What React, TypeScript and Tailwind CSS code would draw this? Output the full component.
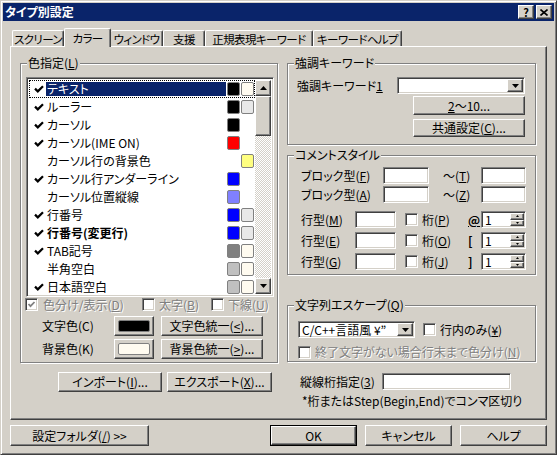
import React from "react";

const raised =
  "bg-[#d4d0c8] border border-t-white border-l-white border-r-[#404040] border-b-[#404040] shadow-[inset_-1px_-1px_0_#808080]";
const sunken =
  "bg-white border border-t-[#808080] border-l-[#808080] border-r-white border-b-white shadow-[inset_1px_1px_0_#404040,inset_-1px_-1px_0_#d4d0c8]";
const disabled = "text-[#808080] [text-shadow:1px_1px_0_#fff]";
const tab =
  "h-[16px] flex items-center justify-center whitespace-nowrap text-[11.5px] tracking-[-0.6px] border-t border-l border-r border-t-white border-l-white border-r-[#404040] rounded-t-[2px] shadow-[inset_-1px_0_0_#808080]";

type Item = { label: string; check: boolean; fg?: string; bg?: string; bold?: boolean };

const items: Item[] = [
  { label: "テキスト", check: true, fg: "bg-black", bg: "bg-[#fffbf0]" },
  { label: "ルーラー", check: true, fg: "bg-black", bg: "bg-[#e8e8e8]" },
  { label: "カーソル", check: true, fg: "bg-black" },
  { label: "カーソル(IME ON)", check: true, fg: "bg-[#ff0000]" },
  { label: "カーソル行の背景色", check: false, bg: "bg-[#ffff80]" },
  { label: "カーソル行アンダーライン", check: true, fg: "bg-[#0000ff]" },
  { label: "カーソル位置縦線", check: false, fg: "bg-[#8080ff]" },
  { label: "行番号", check: true, fg: "bg-[#0000ff]", bg: "bg-[#e8e8e8]" },
  { label: "行番号(変更行)", check: true, fg: "bg-[#0000ff]", bg: "bg-[#e8e8e8]", bold: true },
  { label: "TAB記号", check: true, fg: "bg-[#808080]", bg: "bg-[#fffbf0]" },
  { label: "半角空白", check: false, fg: "bg-[#c0c0c0]", bg: "bg-[#fffbf0]" },
  { label: "日本語空白", check: true, fg: "bg-[#c0c0c0]", bg: "bg-[#fffbf0]" },
];

function Arrow({ dir }: { dir: "up" | "down" }) {
  return (
    <svg width="7" height="4" viewBox="0 0 7 4">
      {dir === "up" ? <polygon points="3.5,0 7,4 0,4" fill="#000" /> : <polygon points="0,0 7,0 3.5,4" fill="#000" />}
    </svg>
  );
}

function Check({ on, off }: { on?: boolean; off?: boolean }) {
  return (
    <div className={`w-[13px] h-[13px] shrink-0 flex items-center justify-center ${sunken} ${off ? "bg-[#d4d0c8]" : ""}`}>
      {on && (
        <svg width="9" height="9" viewBox="0 0 9 9">
          <polyline points="1.5,4 3.5,6.2 7.5,2" fill="none" stroke={off ? "#808080" : "#000"} strokeWidth="1.8" />
        </svg>
      )}
    </div>
  );
}

function Group({ label, className, children }: { label: React.ReactNode; className: string; children?: React.ReactNode }) {
  return (
    <div className={`relative border border-[#808080] shadow-[inset_1px_1px_0_#fff,1px_1px_0_#fff] ${className}`}>
      <span className="absolute -top-[8px] left-[6px] bg-[#d4d0c8] px-[1px] leading-[14px] whitespace-nowrap">{label}</span>
      {children}
    </div>
  );
}

function Combo({ text, className }: { text?: string; className: string }) {
  return (
    <div className={`flex items-stretch p-[1px] ${sunken} ${className}`}>
      <div className="flex-1 pl-[2px] flex items-center leading-[13px] whitespace-nowrap">{text}</div>
      <div className={`w-[16px] flex items-center justify-center ${raised}`}>
        <Arrow dir="down" />
      </div>
    </div>
  );
}

function Spin({ value }: { value: string }) {
  return (
    <div className={`w-[45px] h-[17px] flex items-stretch p-[1px] ${sunken}`}>
      <div className="flex-1 pl-[2px] flex items-center leading-[13px]">{value}</div>
      <div className="w-[14px] flex flex-col">
        <div className={`flex-1 flex items-center justify-center ${raised}`}>
          <svg width="3" height="2" viewBox="0 0 3 2"><polygon points="1.5,0 3,2 0,2" fill="#000" /></svg>
        </div>
        <div className={`flex-1 flex items-center justify-center ${raised}`}>
          <svg width="3" height="2" viewBox="0 0 3 2"><polygon points="0,0 3,0 1.5,2" fill="#000" /></svg>
        </div>
      </div>
    </div>
  );
}

function Field({ className }: { className: string }) {
  return <div className={`${sunken} ${className}`} />;
}

function Swatch({ color }: { color?: string }) {
  return (
    <div className="w-[14px] h-[18px] flex items-center justify-start">
      {color && <div className={`w-[13px] h-[14px] border border-[#808080] rounded-[2px] ${color}`} />}
    </div>
  );
}

export default function App() {
  return (
    <div className="w-[557px] h-[455px] bg-[#d4d0c8] border border-t-[#d4d0c8] border-l-[#d4d0c8] border-r-[#404040] border-b-[#404040] shadow-[inset_1px_1px_0_#fff,inset_-1px_-1px_0_#808080] p-[2px] text-[12px] leading-[14px] text-black font-['Noto_Sans_CJK_JP',sans-serif] [font-feature-settings:'palt'] overflow-hidden">
      {/* title bar */}
      <div className="h-[18px] bg-[#0a246a] flex items-center justify-between pl-[2px] pr-[2px]">
        <span className="text-white font-bold text-[12px]">タイプ別設定</span>
        <div className="flex gap-[2px]">
          <div className={`w-[16px] h-[14px] flex items-center justify-center font-bold text-[11px] leading-none ${raised}`}>?</div>
          <div className={`w-[16px] h-[14px] flex items-center justify-center ${raised}`}>
            <svg width="8" height="7" viewBox="0 0 8 7">
              <path d="M0.5 0.5 L7.5 6.5 M7.5 0.5 L0.5 6.5" stroke="#000" strokeWidth="1.6" />
            </svg>
          </div>
        </div>
      </div>

      {/* tabs */}
      <div className="mt-[7px] ml-[9px] flex items-end h-[18px]">
        <div className={`w-[52px] ${tab}`}>スクリーン</div>
        <div className="relative z-10 -mb-[1px] w-[47px] h-[19px] bg-[#d4d0c8] flex items-center justify-center whitespace-nowrap text-[11.5px] tracking-[-0.6px] border-t border-l border-r border-t-white border-l-white border-r-[#404040] rounded-t-[2px] shadow-[inset_-1px_0_0_#808080]">カラー</div>
        <div className="w-[52px] h-[16px] flex items-center justify-center whitespace-nowrap text-[11.5px] tracking-[-0.6px] border-t border-r border-t-white border-r-[#404040] rounded-t-[2px] shadow-[inset_-1px_0_0_#808080]">ウィンドウ</div>
        <div className={`w-[42px] ${tab}`}>支援</div>
        <div className={`w-[108px] ${tab}`}>正規表現キーワード</div>
        <div className={`w-[89px] ${tab}`}>キーワードヘルプ</div>
      </div>

      {/* panel */}
      <div className="ml-[7px] w-[537px] h-[374px] border border-t-white border-l-white border-r-[#404040] border-b-[#404040] shadow-[inset_-1px_-1px_0_#808080] flex pl-[9px] pt-[16px]">
        {/* left column */}
        <div className="w-[258px] flex flex-col">
          <Group label={<>色指定(<u>L</u>)</>} className="h-[300px] flex flex-col">
            <div className={`mt-[13px] ml-[5px] w-[248px] h-[220px] p-[2px] flex ${sunken}`}>
              <div className="flex-1 flex flex-col overflow-hidden">
                {items.map((it, i) => (
                  <div
                    key={it.label}
                    className={`h-[18px] shrink-0 flex items-center ${i === 0 ? "outline-1 outline-dotted outline-black -outline-offset-1" : ""}`}
                  >
                    <div className="w-[17px] pl-[5px] flex items-center">
                      {it.check && (
                        <svg width="10" height="8" viewBox="0 0 10 8">
                          <polyline points="1,3.6 3.8,6.4 9,1.2" fill="none" stroke="#000" strokeWidth="2.2" />
                        </svg>
                      )}
                    </div>
                    <div
                      className={`flex-1 h-[14px] flex items-center pl-[1px] whitespace-nowrap ${i === 0 ? "bg-[#0a246a] text-white" : ""} ${it.bold ? "font-bold" : ""}`}
                    >
                      {it.label}
                    </div>
                    <div className="ml-[1px] flex">
                      <Swatch color={it.fg} />
                      <Swatch color={it.bg} />
                    </div>
                  </div>
                ))}
              </div>
              <div className="w-[16px] flex flex-col">
                <div className={`h-[16px] flex items-center justify-center ${raised}`}>
                  <Arrow dir="up" />
                </div>
                <div className={`h-[40px] ${raised}`} />
                <div className="flex-1 bg-[repeating-conic-gradient(#ffffff_0%_25%,#d4d0c8_0%_50%)] bg-[length:2px_2px]" />
                <div className={`h-[16px] flex items-center justify-center ${raised}`}>
                  <Arrow dir="down" />
                </div>
              </div>
            </div>

            <div className="mt-[1px] ml-[4px] flex items-center h-[13px]">
              <div className="w-[117px] flex items-center gap-[5px]">
                <Check on off />
                <span className={disabled}>色分け/表示(<u>D</u>)</span>
              </div>
              <div className="w-[69px] flex items-center gap-[4px]">
                <Check off />
                <span className={disabled}>太字(<u>B</u>)</span>
              </div>
              <div className="flex items-center gap-[4px]">
                <Check off />
                <span className={disabled}>下線(<u>U</u>)</span>
              </div>
            </div>

            <div className="mt-[5px] ml-[21px] flex items-center h-[20px]">
              <span className="w-[72px]">文字色(C)</span>
              <div className={`w-[40px] h-[20px] flex items-center justify-center ${raised}`}>
                <div className="w-[32px] h-[12px] bg-black border border-[#808080] rounded-[2px]" />
              </div>
              <div className={`ml-[7px] w-[102px] h-[20px] flex items-center justify-center ${raised}`}>
                文字色統一(<u>&lt;</u>)...
              </div>
            </div>
            <div className="mt-[3px] ml-[21px] flex items-center h-[20px]">
              <span className="w-[72px]">背景色(K)</span>
              <div className={`w-[40px] h-[20px] flex items-center justify-center ${raised}`}>
                <div className="w-[32px] h-[12px] bg-[#fffbf0] border border-[#808080] rounded-[2px]" />
              </div>
              <div className={`ml-[7px] w-[102px] h-[20px] flex items-center justify-center ${raised}`}>
                背景色統一(<u>&gt;</u>)...
              </div>
            </div>
          </Group>

          <div className="mt-[9px] ml-[38px] flex gap-[5px]">
            <div className={`w-[104px] h-[20px] flex items-center justify-center ${raised}`}>
              インポート(<u>I</u>)...
            </div>
            <div className={`w-[105px] h-[20px] flex items-center justify-center ${raised}`}>
              エクスポート(<u>X</u>)...
            </div>
          </div>
        </div>

        {/* right column */}
        <div className="ml-[9px] w-[249px] flex flex-col">
          <Group label="強調キーワード" className="h-[82px] flex flex-col">
            <div className="mt-[13px] pl-[9px] flex items-center">
              <span className="w-[100px]">強調キーワード<u>1</u></span>
              <Combo className="w-[128px] h-[17px]" />
            </div>
            <div className={`mt-[2px] ml-[125px] w-[112px] h-[19px] flex items-center justify-center ${raised}`}>
              <span><u>2</u>～10...</span>
            </div>
            <div className={`mt-[4px] ml-[125px] w-[112px] h-[18px] flex items-center justify-center ${raised}`}>
              <span>共通設定(<u>C</u>)...</span>
            </div>
          </Group>

          <Group label="コメントスタイル" className="mt-[10px] h-[120px] flex flex-col">
            <div className="mt-[11px] pl-[13px] flex items-center h-[17px]">
              <span className="w-[82px]">ブロック型(<u>F</u>)</span>
              <Field className="w-[46px] h-[17px]" />
              <span className="ml-[14px] w-[38px]">～(<u>T</u>)</span>
              <Field className="w-[45px] h-[17px]" />
            </div>
            <div className="mt-[2px] pl-[13px] flex items-center h-[17px]">
              <span className="w-[82px]">ブロック型(<u>A</u>)</span>
              <Field className="w-[46px] h-[17px]" />
              <span className="ml-[14px] w-[38px]">～(<u>Z</u>)</span>
              <Field className="w-[45px] h-[17px]" />
            </div>
            {[
              ["M", "P", "@"],
              ["E", "O", "["],
              ["G", "J", "]"],
            ].map(([a, b, sym], i) => (
              <div key={a} className={`${i === 0 ? "mt-[8px]" : "mt-[4px]"} pl-[13px] flex items-center h-[17px]`}>
                <span className="w-[54px]">行型(<u>{a}</u>)</span>
                <Field className="w-[41px] h-[17px]" />
                <div className="ml-[9px]">
                  <Check />
                </div>
                <span className="ml-[4px] w-[46px]">桁(<u>{b}</u>)</span>
                <span className={`w-[13px] font-bold ${sym === "@" ? "underline" : ""}`}>{sym}</span>
                <Spin value="1" />
              </div>
            ))}
          </Group>

          <Group label={<>文字列エスケープ(<u>Q</u>)</>} className="mt-[30px] h-[57px] flex flex-col">
            <div className="mt-[15px] pl-[10px] flex items-center">
              <Combo text="C/C++言語風 ¥”" className="w-[117px] h-[17px]" />
              <div className="ml-[8px]">
                <Check />
              </div>
              <span className="ml-[4px]">行内のみ(<u>¥</u>)</span>
            </div>
            <div className="mt-[7px] pl-[10px] flex items-center">
              <Check off />
              <span className={`ml-[4px] whitespace-nowrap ${disabled}`}>終了文字がない場合行末まで色分け(<u>N</u>)</span>
            </div>
          </Group>

          <div className="mt-[11px] pl-[13px] flex items-center h-[17px]">
            <span className="w-[82px]">縦線桁指定(<u>3</u>)</span>
            <Field className="w-[129px] h-[17px]" />
          </div>
          <div className="mt-[4px] pl-[15px] whitespace-nowrap">*桁またはStep(Begin,End)でコンマ区切り</div>
        </div>
      </div>

      {/* bottom buttons */}
      <div className="mt-[5px] ml-[7px] flex h-[21px]">
        <div className={`w-[139px] flex items-center justify-center ${raised}`}>
          設定フォルダ(<u>/</u>) &gt;&gt;
        </div>
        <div className="ml-[121px] w-[87px] border border-black">
          <div className={`h-full flex items-center justify-center ${raised}`}>OK</div>
        </div>
        <div className={`ml-[8px] w-[87px] flex items-center justify-center ${raised}`}>キャンセル</div>
        <div className={`ml-[8px] w-[87px] flex items-center justify-center ${raised}`}>ヘルプ</div>
      </div>
    </div>
  );
}
